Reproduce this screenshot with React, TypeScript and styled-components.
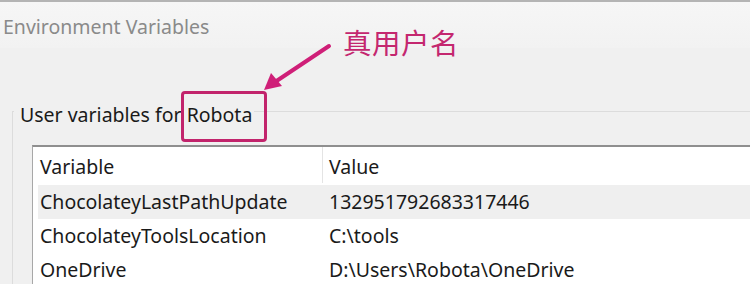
import React from 'react';
import styled, { createGlobalStyle } from 'styled-components';

const GlobalStyle = createGlobalStyle`
	html, body {
		margin: 0;
		padding: 0;
		background: #f0f0f0;
	}
`;

const Window = styled.div`
	position: relative;
	width: 750px;
	height: 284px;
	overflow: hidden;
	background: #f0f0f0;
	border-top: 2px solid #b4b4b4;
	box-sizing: border-box;
	font-family: 'Noto Sans', 'Open Sans', sans-serif;
	color: #1a1a1a;
`;

const TitleBar = styled.div`
	height: 46px;
	display: flex;
	align-items: center;
	padding: 2px 0 0 3px;
	box-sizing: border-box;
	background: linear-gradient(#f6f6f6, #f2f2f2);
	color: #8a8a8a;
	font-size: 19.5px;
`;

const Content = styled.div`
	padding: 63px 0 0 12px;
`;

const GroupBox = styled.div`
	border-top: 1px solid #dcdcdc;
	border-left: 1px solid #dcdcdc;
	padding-left: 19px;
	height: 300px;
`;

const GroupLabel = styled.div`
	width: fit-content;
	margin: -12px 0 0 -18px;
	padding: 0 2px 0 6px;
	background: #f0f0f0;
	font-size: 19.5px;
	line-height: 30px;
`;

const Table = styled.div`
	margin-top: 15px;
	background: #fff;
	border-top: 2px solid #8f8f8f;
	border-left: 1px solid #a8a8a8;
	font-size: 19.5px;
`;

const HeadRow = styled.div`
	display: grid;
	grid-template-columns: 290px 1fr;
	height: 38px;
`;

const HeadCell = styled.div<{ $divider?: boolean }>`
	display: flex;
	align-items: center;
	padding-left: ${({ $divider }) => ($divider ? '7px' : '6px')};
	border-right: ${({ $divider }) => ($divider ? '1px solid #e4e4e4' : 'none')};
	margin-bottom: 2px;
	padding-top: 2px;
`;

const Row = styled.div<{ $selected?: boolean }>`
	display: grid;
	grid-template-columns: 289px 1fr;
	height: 34px;
	align-items: center;
	margin-left: 5px;
	background: ${({ $selected }) => ($selected ? '#efefef' : 'transparent')};
`;

const Cell = styled.div`
	padding-left: 2px;
	white-space: nowrap;
	line-height: 26px;
`;

const Callout = styled.div`
	position: absolute;
	left: 343px;
	top: 20px;
	color: #c4276f;
	font-family: 'Noto Sans CJK SC', sans-serif;
	font-size: 28.5px;
	line-height: 40px;
	letter-spacing: 0.5px;
`;

const Highlight = styled.div`
	position: absolute;
	left: 181px;
	top: 89px;
	width: 80px;
	height: 45px;
	border: 3px solid #c2246c;
	border-radius: 4px;
`;

const Arrow = styled.svg`
	position: absolute;
	left: 255px;
	top: 38px;
`;

const rows = [
	['ChocolateyLastPathUpdate', '132951792683317446'],
	['ChocolateyToolsLocation', 'C:\\tools'],
	['OneDrive', 'D:\\Users\\Robota\\OneDrive'],
];

const App = () => {
	return (
		<Window>
			<GlobalStyle />
			<TitleBar>Environment Variables</TitleBar>
			<Content>
				<GroupBox>
					<GroupLabel>User variables for Robota</GroupLabel>
					<Table>
						<HeadRow>
							<HeadCell $divider>Variable</HeadCell>
							<HeadCell>Value</HeadCell>
						</HeadRow>
						{rows.map(([name, value], i) => (
							<Row key={name} $selected={i === 0}>
								<Cell>{name}</Cell>
								<Cell>{value}</Cell>
							</Row>
						))}
					</Table>
				</GroupBox>
			</Content>
			<Callout>真用户名</Callout>
			<Highlight />
			<Arrow width="80" height="56" viewBox="0 0 80 56">
				<line x1="74" y1="6" x2="20" y2="42" stroke="#cf1f78" strokeWidth="4" strokeLinecap="round" />
				<polygon points="9,50 16,33 27,46" fill="#cf1f78" />
			</Arrow>
		</Window>
	);
};

export default App;
